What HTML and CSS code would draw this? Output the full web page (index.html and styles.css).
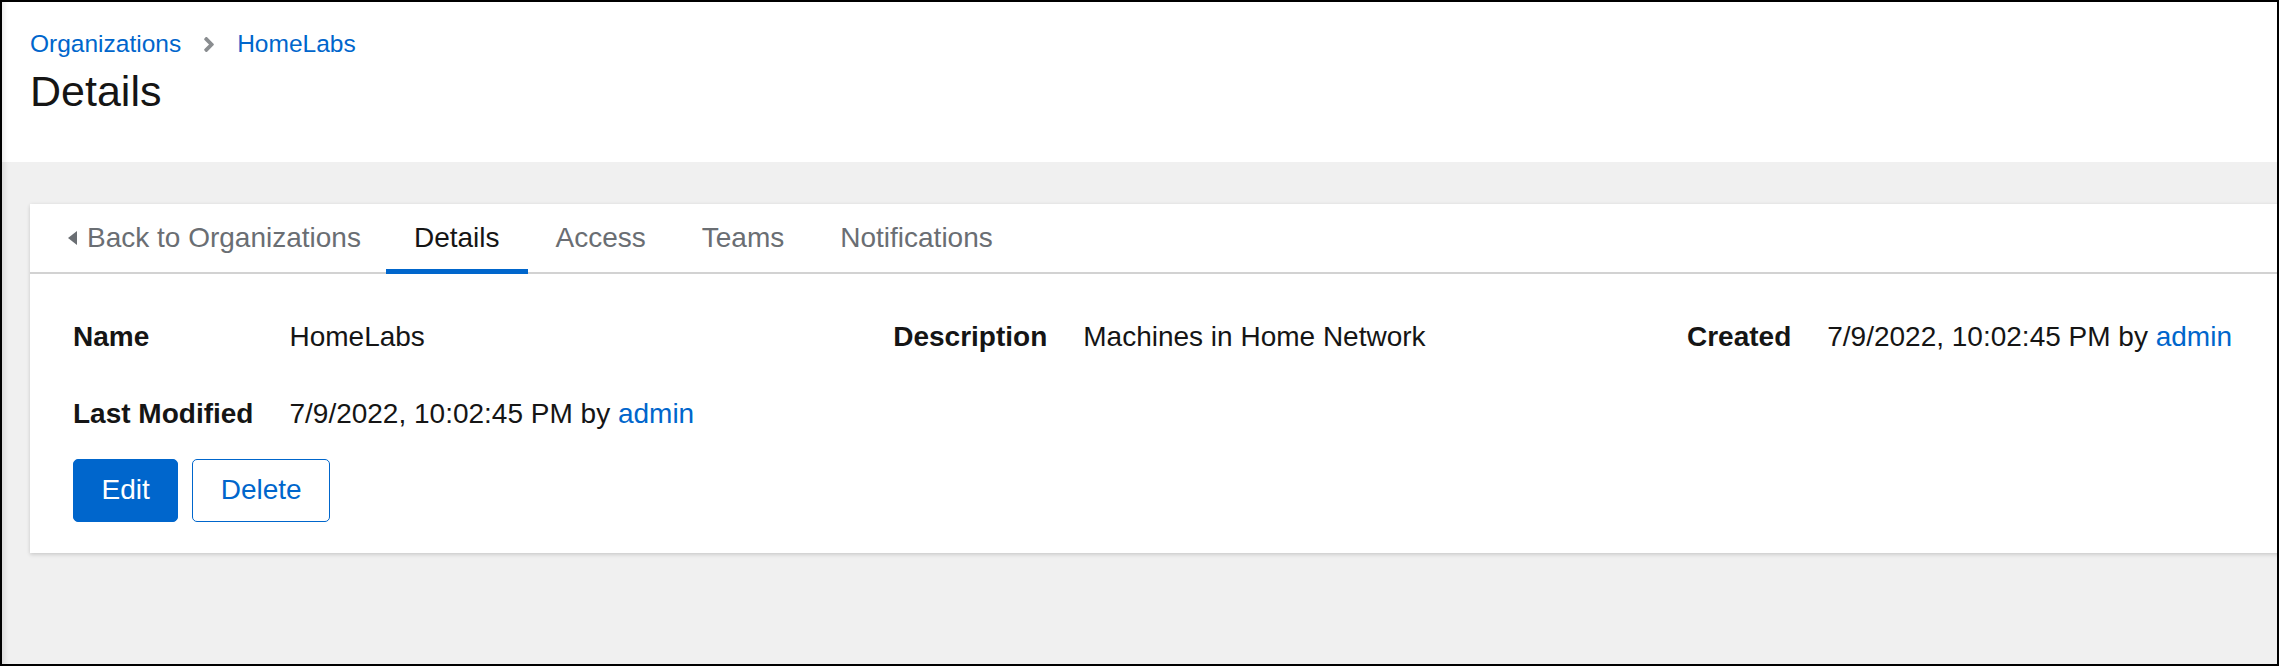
FILE: index.html
```html
<!DOCTYPE html>
<html lang="en">
<head>
  <meta charset="UTF-8">
  <meta name="viewport" content="width=device-width, initial-scale=1.0">
  <title>HomeLabs | Details</title>
  <link rel="stylesheet" href="styles.css">
</head>
<body>

  <div class="frame">
    <header class="page-header">
      <nav class="breadcrumb">
        <a href="#">Organizations</a>
        <svg class="crumb-sep" viewBox="25 96 206 320" aria-hidden="true">
          <path d="M224.3 273l-136 136c-9.4 9.4-24.6 9.4-33.9 0l-22.6-22.6c-9.4-9.4-9.4-24.6 0-33.9l96.4-96.4-96.4-96.4c-9.4-9.4-9.4-24.6 0-33.9L54.3 103c9.4-9.4 24.6-9.4 33.9 0l136 136c9.5 9.4 9.5 24.6.1 34z"/>
        </svg>
        <a href="#">HomeLabs</a>
      </nav>
      <h1 class="title">Details</h1>
    </header>

    <main class="page-main">
      <div class="card">
        <ul class="tabs">
          <li class="tab tab-back">
            <svg class="caret" viewBox="0 0 9 14" aria-hidden="true"><polygon points="9,0 9,14 0,7"/></svg>
            Back to Organizations
          </li>
          <li class="tab active">Details</li>
          <li class="tab">Access</li>
          <li class="tab">Teams</li>
          <li class="tab">Notifications</li>
        </ul>

        <div class="card-body">
          <dl class="detail-list">
            <dt>Name</dt>
            <dd>HomeLabs</dd>
            <dt>Description</dt>
            <dd>Machines in Home Network</dd>
            <dt>Created</dt>
            <dd>7/9/2022, 10:02:45 PM by <a href="#">admin</a></dd>
            <dt>Last Modified</dt>
            <dd>7/9/2022, 10:02:45 PM by <a href="#">admin</a></dd>
          </dl>

          <div class="actions">
            <button class="btn btn-primary">Edit</button>
            <button class="btn btn-secondary">Delete</button>
          </div>
        </div>
      </div>
    </main>
  </div>

</body>
</html>
```

FILE: styles.css
```css
body {
  margin: 0;
  font-family: 'Liberation Sans', Arial, sans-serif;
  color: #151515;
}
a {
  color: #0066cc;
  text-decoration: none;
}
.frame {
  height: 666px;
  box-sizing: border-box;
  border: 2px solid #000;
  overflow: hidden;
  display: flex;
  flex-direction: column;
}
.page-header {
  background: #fff;
  padding: 24px 28px 42px;
  box-shadow: inset 7px 0 6px -6px rgba(0, 0, 0, 0.12);
}
.breadcrumb {
  display: flex;
  align-items: center;
  gap: 23px;
  font-size: 24.5px;
  line-height: 1.5;
}
.crumb-sep {
  width: 10px;
  height: 15px;
  fill: #8a8d90;
}
.title {
  margin: 1px 0 0;
  font-size: 43px;
  font-weight: 400;
  line-height: 1.3;
}
.page-main {
  flex: 1;
  background: #f0f0f0;
  padding: 42px 0 0 28px;
  box-shadow: inset 8px 0 6px -6px rgba(0, 0, 0, 0.12);
}
.card {
  width: 2408px;
  background: #fff;
  box-shadow: 0 2px 4px rgba(3, 3, 3, 0.12), 0 0 4px rgba(3, 3, 3, 0.06);
}
.tabs {
  display: flex;
  margin: 0;
  padding: 0;
  list-style: none;
  border-bottom: 2px solid #d2d2d2;
}
.tab {
  position: relative;
  display: flex;
  align-items: center;
  padding: 13px 28px;
  font-size: 28px;
  line-height: 42px;
  color: #6a6e73;
}
.tab-back {
  padding-left: 38px;
  padding-right: 25px;
  gap: 10px;
}
.caret {
  width: 9px;
  height: 14px;
  fill: #6a6e73;
}
.tab.active {
  color: #151515;
}
.tab.active::after {
  content: "";
  position: absolute;
  left: 0;
  right: 0;
  bottom: -2px;
  height: 5px;
  background: #0066cc;
}
.card-body {
  padding: 42px 43px 31px;
}
.detail-list {
  display: grid;
  grid-template-columns: max-content 1fr max-content 1fr max-content 1fr;
  column-gap: 36px;
  row-gap: 35px;
  margin: 0;
  font-size: 28px;
  line-height: 1.5;
}
.detail-list dt {
  font-weight: 700;
}
.detail-list dd {
  margin: 0;
}
.actions {
  display: flex;
  gap: 14px;
  margin-top: 24px;
}
.btn {
  font-family: inherit;
  font-size: 28px;
  line-height: 42px;
  padding: 9.5px 27.5px;
  border: 1px solid #0066cc;
  border-radius: 5px;
  cursor: pointer;
}
.btn-primary {
  background: #0066cc;
  color: #fff;
}
.btn-secondary {
  background: #fff;
  color: #0066cc;
}
```
